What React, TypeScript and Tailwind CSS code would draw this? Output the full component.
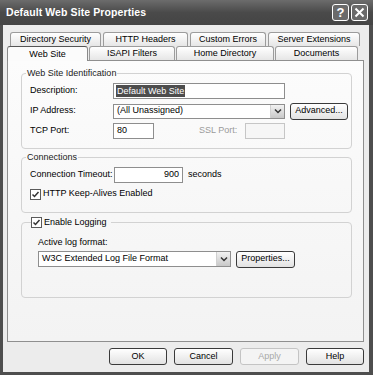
import React from 'react'

const Tab = ({ label, w, selected }: { label: string; w: string; selected?: boolean }) => (
  <div
    className={`${w} flex items-center justify-center border border-b-0 rounded-t-[3px] text-[9px] leading-none text-black ${
      selected
        ? 'h-[15px] -mt-[2px] border-[#8a8a8a] border-t-[#555] bg-[#fbfbfb] relative z-10 -mb-[1px]'
        : 'h-[14px] border-[#9c9c9c] bg-gradient-to-b from-white to-[#e6e6e6]'
    }`}
  >
    {label}
  </div>
)

const Btn = ({ label, w, disabled }: { label: string; w: string; disabled?: boolean }) => (
  <div
    className={`${w} h-[17px] flex items-center justify-center rounded-[3px] border text-[9px] ${
      disabled
        ? 'border-[#c4c4c4] text-[#a8a8a8] bg-[#f4f4f4]'
        : 'border-[#3a3a3a] text-black bg-gradient-to-b from-white to-[#e2e2e2]'
    }`}
  >
    {label}
  </div>
)

const Check = () => (
  <div className="w-[11px] h-[11px] border border-[#5a5a5a] bg-white flex items-center justify-center">
    <svg width="9" height="9" viewBox="0 0 9 9">
      <path d="M1.5 4.5 L3.5 6.5 L7.5 2" stroke="#333" strokeWidth="1.5" fill="none" />
    </svg>
  </div>
)

const DropBtn = () => (
  <div className="w-[14px] h-full bg-gradient-to-b from-[#f2f2f2] to-[#c8c8c8] border-l border-[#d0d0d0] flex items-center justify-center">
    <svg width="8" height="6" viewBox="0 0 8 6">
      <path d="M1 1.5 L4 4.5 L7 1.5" stroke="#333" strokeWidth="1.5" fill="none" />
    </svg>
  </div>
)

export default function App() {
  return (
    <div className="w-[373px] h-[375px] bg-[#4e4e4e] flex flex-col font-['Liberation_Sans',Arial,sans-serif] text-[9px] text-black overflow-hidden">
      {/* title bar */}
      <div className="h-[25px] flex items-center justify-between pl-[6px] pr-[5px] bg-gradient-to-b from-[#6c6c6c] via-[#4a4a4a] to-[#444]">
        <span className="text-white font-bold text-[10.5px] tracking-[0.1px]">Default Web Site Properties</span>
        <div className="flex gap-[2px]">
          <div className="w-[17px] h-[17px] rounded-[3px] border border-white bg-[#6a6a6a] flex items-center justify-center text-white font-bold text-[13px] leading-none">?</div>
          <div className="w-[17px] h-[17px] rounded-[3px] border border-white bg-[#6a6a6a] flex items-center justify-center">
            <svg width="11" height="11" viewBox="0 0 11 11">
              <path d="M1.5 1.5 L9.5 9.5 M9.5 1.5 L1.5 9.5" stroke="white" strokeWidth="2" />
            </svg>
          </div>
        </div>
      </div>

      {/* body */}
      <div className="flex-1 ml-[3px] mr-[4px] mb-[3px] bg-[#ececec] pl-[4px] pr-[5px] pt-[7px] flex flex-col">
        <div className="flex gap-[2px] ml-[3px]">
          <Tab label="Directory Security" w="w-[91px]" />
          <Tab label="HTTP Headers" w="w-[85px]" />
          <Tab label="Custom Errors" w="w-[76px]" />
          <Tab label="Server Extensions" w="w-[92px]" />
        </div>
        <div className="flex gap-[1px] items-end">
          <Tab label="Web Site" w="w-[81px]" selected />
          <Tab label="ISAPI Filters" w="w-[86px]" />
          <Tab label="Home Directory" w="w-[98px]" />
          <Tab label="Documents" w="w-[83px]" />
        </div>

        {/* panel */}
        <div className="h-[282px] border border-[#8f8f8f] bg-gradient-to-b from-[#fcfcfc] to-[#f3f3f3] pl-[13px] pt-[6px] flex flex-col">
          <fieldset className="w-[331px] border border-[#d2d2d2] rounded-[4px] pb-[7px]">
            <legend className="ml-[4px] px-[1px] leading-[12px] text-[#222]">Web Site Identification</legend>
            <div className="pt-[2px] pl-[8px] flex flex-col">
              <div className="h-[20px] flex items-center">
                <span className="w-[83px]">Description:</span>
                <div className="w-[172px] h-[16px] border border-[#8e8e8e] bg-white flex items-center pl-[2px]">
                  <span className="bg-[#4d4d4d] text-white px-[1px] leading-[12px]">Default Web Site</span>
                </div>
              </div>
              <div className="h-[20px] flex items-center">
                <span className="w-[83px]">IP Address:</span>
                <div className="w-[172px] h-[15px] border border-[#8e8e8e] bg-white flex items-center">
                  <span className="flex-1 pl-[3px]">(All Unassigned)</span>
                  <DropBtn />
                </div>
                <div className="ml-[5px]">
                  <Btn label="Advanced..." w="w-[58px]" />
                </div>
              </div>
              <div className="h-[20px] flex items-center">
                <span className="w-[83px]">TCP Port:</span>
                <div className="w-[41px] h-[16px] border border-[#8e8e8e] bg-white flex items-center pl-[3px]">80</div>
                <span className="ml-[45px] w-[46px] text-[#9a9a9a]">SSL Port:</span>
                <div className="w-[40px] h-[16px] border border-[#c6c6c6] bg-[#f6f6f6]" />
              </div>
            </div>
          </fieldset>

          <fieldset className="mt-[2px] w-[331px] border border-[#d2d2d2] rounded-[4px] pb-[9px]">
            <legend className="ml-[4px] px-[1px] leading-[12px] text-[#222]">Connections</legend>
            <div className="pt-[2px] pl-[8px] flex flex-col">
              <div className="h-[20px] flex items-center">
                <span className="w-[84px]">Connection Timeout:</span>
                <div className="w-[69px] h-[16px] border border-[#8e8e8e] bg-white flex items-center justify-end pr-[3px]">900</div>
                <span className="ml-[5px]">seconds</span>
              </div>
              <div className="h-[18px] flex items-center gap-[2px]">
                <Check />
                <span>HTTP Keep-Alives Enabled</span>
              </div>
            </div>
          </fieldset>

          <fieldset className="mt-[3px] w-[331px] h-[82px] border border-[#d2d2d2] rounded-[4px]">
            <legend className="ml-[9px] pr-[4px] leading-[12px] flex items-center gap-[2px]">
              <Check />
              <span>Enable Logging</span>
            </legend>
            <div className="pt-[8px] pl-[16px] flex flex-col">
              <div className="h-[14px] flex items-center">Active log format:</div>
              <div className="h-[18px] flex items-center">
                <div className="w-[193px] h-[16px] border border-[#8e8e8e] bg-white flex items-center">
                  <span className="flex-1 pl-[3px]">W3C Extended Log File Format</span>
                  <DropBtn />
                </div>
                <div className="ml-[5px]">
                  <Btn label="Properties..." w="w-[59px]" />
                </div>
              </div>
            </div>
          </fieldset>
        </div>

        {/* dialog buttons */}
        <div className="mt-[6px] flex justify-end gap-[7px]">
          <Btn label="OK" w="w-[58px]" />
          <Btn label="Cancel" w="w-[59px]" />
          <Btn label="Apply" w="w-[59px]" disabled />
          <Btn label="Help" w="w-[58px]" />
        </div>
      </div>
    </div>
  )
}
